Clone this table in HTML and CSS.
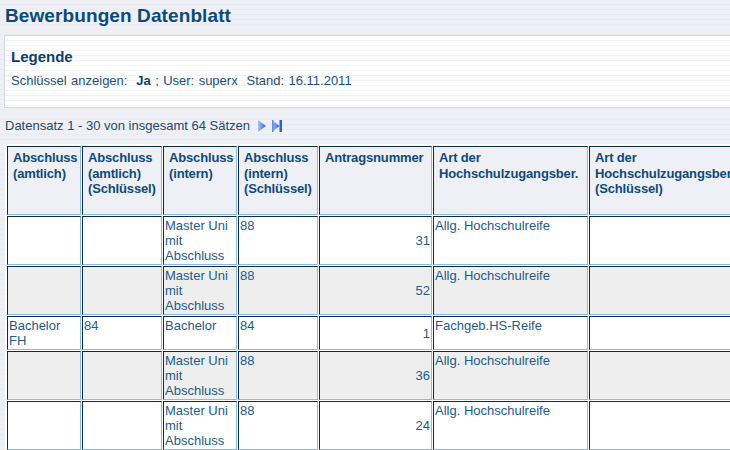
FILE: index.html
```html
<!DOCTYPE html>
<html lang="de">
<head>
<meta charset="utf-8">
<title>Bewerbungen Datenblatt</title>
<link rel="stylesheet" href="styles.css">
</head>
<body>
<h1 class="title">Bewerbungen Datenblatt</h1>
<div class="legend">
  <div class="legend-title">Legende</div>
  <div class="legend-line">Schlüssel anzeigen:&nbsp; <b>Ja</b> ; User: superx&nbsp; Stand: 16.11.2011</div>
</div>
<div class="pager">
  <span>Datensatz 1 - 30 von insgesamt 64 Sätzen</span>
  <svg class="ico" width="10" height="14" viewBox="0 0 10 14">
    <defs>
      <linearGradient id="g1" x1="0" y1="0" x2="1" y2="0">
        <stop offset="0" stop-color="#a9c6f2"/>
        <stop offset="1" stop-color="#2f62d0"/>
      </linearGradient>
    </defs>
    <polygon points="1,1 9,7 1,13" fill="url(#g1)"/>
  </svg>
  <svg class="ico" width="12" height="14" viewBox="0 0 12 14">
    <defs>
      <linearGradient id="g2" x1="0" y1="0" x2="1" y2="0">
        <stop offset="0" stop-color="#a9c6f2"/>
        <stop offset="1" stop-color="#2f62d0"/>
      </linearGradient>
    </defs>
    <polygon points="1,1 8.5,7 1,13" fill="url(#g2)"/>
    <rect x="1" y="1" width="1.5" height="12" fill="#5f8ddf"/>
    <rect x="8.5" y="1" width="2.5" height="12" fill="#2f62d0"/>
  </svg>
</div>
<table class="data">
  <colgroup>
    <col class="c1"><col class="c2"><col class="c3"><col class="c4"><col class="c5"><col class="c6"><col class="c7">
  </colgroup>
  <thead>
    <tr>
      <th>Abschluss (amtlich)</th>
      <th>Abschluss (amtlich) (Schlüssel)</th>
      <th>Abschluss (intern)</th>
      <th>Abschluss (intern) (Schlüssel)</th>
      <th>Antragsnummer</th>
      <th>Art der Hochschulzugangsber.</th>
      <th class="nowrap">Art der<br>Hochschulzugangsber.<br>(Schlüssel)</th>
    </tr>
  </thead>
  <tbody>
    <tr>
      <td></td><td></td><td>Master Uni mit Abschluss</td><td>88</td><td class="num">31</td><td>Allg. Hochschulreife</td><td></td>
    </tr>
    <tr class="alt">
      <td></td><td></td><td>Master Uni mit Abschluss</td><td>88</td><td class="num">52</td><td>Allg. Hochschulreife</td><td></td>
    </tr>
    <tr>
      <td>Bachelor FH</td><td>84</td><td>Bachelor</td><td>84</td><td class="num">1</td><td>Fachgeb.HS-Reife</td><td></td>
    </tr>
    <tr class="alt">
      <td></td><td></td><td>Master Uni mit Abschluss</td><td>88</td><td class="num">36</td><td>Allg. Hochschulreife</td><td></td>
    </tr>
    <tr>
      <td></td><td></td><td>Master Uni mit Abschluss</td><td>88</td><td class="num">24</td><td>Allg. Hochschulreife</td><td></td>
    </tr>
  </tbody>
</table>
</body>
</html>
```
FILE: styles.css
```css
html {
  overflow: hidden;
}
body {
  margin: 0;
  padding: 5px 0 0 4px;
  font-family: "Liberation Sans", Arial, sans-serif;
  color: #1d5788;
  background: repeating-linear-gradient(to bottom, #eef0f6 0, #eef0f6 4px, #e9ebf3 4px, #e9ebf3 5px);
  width: 1000px;
}
.title {
  margin: 0 0 8px 1px;
  font-size: 19px;
  line-height: 22px;
  font-weight: bold;
  letter-spacing: 0.1px;
  color: #0b4a7c;
}
.legend {
  border-top: 1px solid #d6d8de;
  border-bottom: 1px solid #d6d8de;
  border-left: 1px solid #d6d8de;
  background: repeating-linear-gradient(to bottom, #ffffff 0, #ffffff 4px, #f3f3f5 4px, #f3f3f5 5px);
  padding: 12px 0 18px 6px;
}
.legend-title {
  font-size: 15px;
  line-height: 18px;
  font-weight: bold;
  color: #0a3f6e;
  margin-bottom: 7px;
}
.legend-line {
  font-size: 13px;
  line-height: 16px;
  word-spacing: 0.8px;
  color: #1d4f7c;
}
.legend-line b {
  color: #123f66;
}
.pager {
  display: flex;
  align-items: center;
  gap: 4px;
  margin: 10px 0 10px 1px;
  font-size: 13px;
  line-height: 16px;
  color: #1d4a72;
}
.pager span {
  margin-right: 3px;
}
.ico {
  display: block;
}
.data {
  margin-left: 1px;
  background: #ffffff;
  border: 1px solid #ffffff;
  border-spacing: 1px;
  table-layout: fixed;
  width: 746px;
}
.c1 { width: 74px; }
.c2 { width: 80px; }
.c3 { width: 74px; }
.c4 { width: 80px; }
.c5 { width: 113px; }
.c6 { width: 155px; }
.c7 { width: 160px; }
.data th,
.data td {
  box-sizing: border-box;
  border-style: solid;
  border-width: 1px;
  border-color: #0a2c4c #8dbae0 #8dbae0 #0a2c4c;
  vertical-align: top;
  text-align: left;
}
.data th {
  height: 69px;
  padding: 3px 3px 2px 5px;
  background: #eff0f5;
  font-size: 13px;
  line-height: 15.5px;
  font-weight: bold;
  letter-spacing: -0.15px;
  color: #0c4a7e;
}
.nowrap {
  white-space: nowrap;
  overflow: hidden;
}
.data td {
  padding: 1px;
  background: #ffffff;
  font-size: 13px;
  line-height: 15px;
  color: #1d5b8d;
  overflow: hidden;
}
.data tr.alt td {
  background: #eeeeee;
}
.data td.num {
  text-align: right;
  vertical-align: middle;
}
```
